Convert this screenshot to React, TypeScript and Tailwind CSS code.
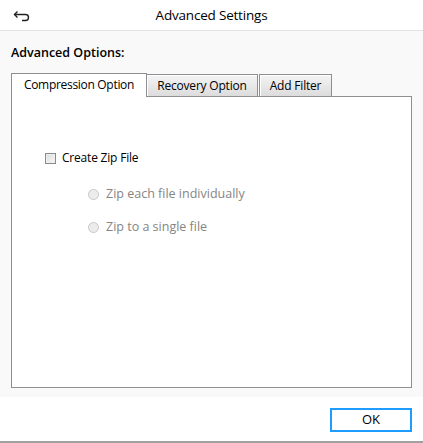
import React from "react";

export default function App() {
  const font = { fontFamily: '"Open Sans", "Noto Sans", sans-serif' };
  return (
    <div className="w-[423px] h-[443px] flex flex-col bg-[#f9f9f9] text-black" style={font}>
      <div className="h-[31px] shrink-0 bg-white border-b border-[#e3e3e3] relative flex items-center justify-center">
        <svg className="absolute left-[13px] top-[10px]" width="18" height="13" viewBox="0 0 18 13" fill="none" stroke="#222" strokeWidth="1.4">
          <path d="M4.5 1.5 L1.5 4.5 L4.5 7.5" />
          <path d="M1.5 4.5 H12.5 A3 3 0 0 1 12.5 10.5 H9" />
        </svg>
        <span className="text-[13.5px] tracking-[-0.2px]">Advanced Settings</span>
      </div>
      <div className="flex-1 flex flex-col px-[11px]">
        <div className="mt-[13px] text-[12.5px] font-semibold tracking-[0px] leading-[18px]">Advanced Options:</div>
        <div className="mt-[11px] flex items-end h-[23px] relative z-10">
          <div className="w-[136px] h-[24px] bg-white border border-b-0 border-[#8e8e93] flex items-center justify-center text-[12px] tracking-[-0.3px] pb-[2px] -mb-px">
            Compression Option
          </div>
          <div className="w-[111px] h-[22px] bg-gradient-to-b from-[#f4f4f4] to-[#dcdcdc] border border-b-0 border-l-0 border-[#8e8e93] shadow-[inset_1px_1px_0_#fff] flex items-center justify-center text-[12px] tracking-[-0.2px]">
            Recovery Option
          </div>
          <div className="w-[73px] h-[22px] bg-gradient-to-b from-[#f4f4f4] to-[#dcdcdc] border border-b-0 border-[#8e8e93] shadow-[inset_1px_1px_0_#fff] flex items-center justify-center text-[12px] tracking-[-0.2px] ml-px">
            Add Filter
          </div>
        </div>
        <div className="h-[292px] bg-white border border-[#8e8e93] flex flex-col pl-[33px] pt-[54px]">
          <div className="flex items-center h-[14px]">
            <div className="w-[11px] h-[11px] border border-[#8a8a8a] bg-gradient-to-br from-[#dcdcdc] to-[#f8f8f8] shadow-[inset_0_0_0_1px_#f0f0f0]" />
            <span className="ml-[6px] text-[12px] tracking-[-0.2px]">Create Zip File</span>
          </div>
          <div className="flex items-center h-[14px] mt-[22px] ml-[43px]">
            <div className="w-[11px] h-[11px] rounded-full border border-[#c8c8c8] bg-[#ececec]" />
            <span className="ml-[7px] text-[12.5px] tracking-[0px] text-[#858585]">Zip each file individually</span>
          </div>
          <div className="flex items-center h-[14px] mt-[19px] ml-[43px]">
            <div className="w-[11px] h-[11px] rounded-full border border-[#c8c8c8] bg-[#ececec]" />
            <span className="ml-[7px] text-[12.5px] tracking-[0px] text-[#858585]">Zip to a single file</span>
          </div>
        </div>
      </div>
      <div className="h-[46px] shrink-0 bg-white border-b-2 border-[#a0a0a0] flex items-start justify-end pr-[11px] pt-[11px]">
        <button className="w-[82px] h-[24px] border-2 border-[#1e9cff] bg-white text-[13px] flex items-center justify-center">
          OK
        </button>
      </div>
    </div>
  );
}
